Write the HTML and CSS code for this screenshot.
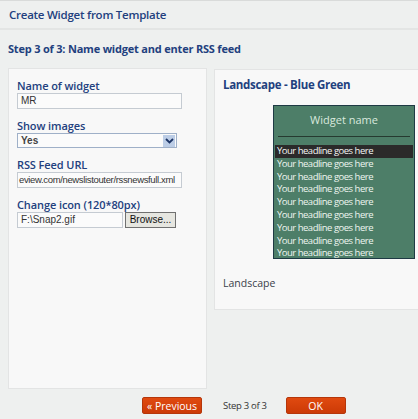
FILE: index.html
```html
<!DOCTYPE html>
<html>
<head>
<meta charset="utf-8">
<link rel="stylesheet" href="styles.css">
</head>
<body>
<div class="page">
  <div class="header"><h1 class="title">Create Widget from Template</h1></div>
  <h2 class="step">Step 3 of 3: Name widget and enter RSS feed</h2>
  <div class="main">
    <div class="panel left">
      <div class="field">
        <label class="label">Name of widget</label>
        <div class="input wide">MR</div>
      </div>
      <div class="field">
        <label class="label">Show images</label>
        <div class="select"><span class="sel-text">Yes</span><span class="sel-btn"><svg width="9" height="6" viewBox="0 0 9 6"><path d="M1 1 L4.5 4.5 L8 1" fill="none" stroke="#1d3566" stroke-width="1.8"/></svg></span></div>
      </div>
      <div class="field">
        <label class="label">RSS Feed URL</label>
        <div class="input wide url">eview.com/newslistouter/rssnewsfull.xml</div>
      </div>
      <div class="field">
        <label class="label">Change icon (120*80px)</label>
        <div class="file-row"><div class="input file">F:\Snap2.gif</div><div class="browse">Browse...</div></div>
      </div>
    </div>
    <div class="panel right">
      <h3 class="tpl-title">Landscape - Blue Green</h3>
      <div class="preview">
        <div class="pv-name">Widget name</div>
        <div class="pv-rule"></div>
        <div class="pv-list">
          <div class="pv-row active">Your headline goes here</div>
          <div class="pv-row">Your headline goes here</div>
          <div class="pv-row">Your headline goes here</div>
          <div class="pv-row">Your headline goes here</div>
          <div class="pv-row">Your headline goes here</div>
          <div class="pv-row">Your headline goes here</div>
          <div class="pv-row">Your headline goes here</div>
          <div class="pv-row">Your headline goes here</div>
          <div class="pv-row">Your headline goes here</div>
        </div>
      </div>
      <div class="tpl-name">Landscape</div>
    </div>
  </div>
  <div class="footer">
    <button class="btn prev">« Previous</button>
    <span class="step-count">Step 3 of 3</span>
    <button class="btn ok">OK</button>
  </div>
</div>
</body>
</html>
```

FILE: styles.css
```css
html, body {
  margin: 0;
  padding: 0;
}
body {
  background: #eef0ef;
  font-family: "Open Sans", "DejaVu Sans", sans-serif;
  width: 418px;
  height: 419px;
  overflow: hidden;
}
.page {
  width: 418px;
}
.header {
  border-top: 1px solid #d9dbda;
  border-bottom: 2px solid #e3e5e4;
  height: 27px;
  padding-left: 9px;
  display: flex;
  align-items: center;
}
.title {
  margin: 0;
  font-size: 11.5px;
  font-weight: 600;
  color: #22407e;
  letter-spacing: -0.25px;
}
.step {
  margin: 0;
  padding: 11px 0 0 8px;
  height: 27px;
  font-size: 11px;
  font-weight: 700;
  color: #22407e;
  letter-spacing: -0.2px;
  line-height: 16px;
  box-sizing: border-box;
}
.main {
  display: flex;
  align-items: flex-start;
  gap: 7px;
  padding-left: 8px;
  margin-top: 11px;
}
.panel {
  background: #f8f8f8;
  border: 1px solid #e3e4e4;
  box-sizing: border-box;
  flex-shrink: 0;
}
.left {
  width: 199px;
  height: 321px;
  padding: 9px 0 0 8px;
}
.right {
  width: 220px;
  height: 241px;
  padding: 7px 0 0 8px;
  margin-top: 1px;
}
.field {
  margin-bottom: 9px;
}
.label {
  display: block;
  font-size: 11px;
  font-weight: 600;
  color: #22407e;
  line-height: 15px;
  letter-spacing: -0.1px;
}
.input {
  height: 16px;
  box-sizing: border-box;
  border: 1px solid #c5cbd2;
  background: #fbfbfb;
  font-family: "Liberation Sans", Arial, sans-serif;
  font-size: 10px;
  color: #333;
  line-height: 14px;
  padding-left: 3px;
  white-space: nowrap;
  overflow: hidden;
}
.wide {
  width: 165px;
}
.url {
  font-size: 9.5px;
  letter-spacing: -0.35px;
  padding-left: 1px;
}
.select {
  width: 160px;
  height: 15px;
  box-sizing: border-box;
  border: 1px solid #9fb0c8;
  background: #fbfbfb;
  display: flex;
  align-items: center;
  justify-content: space-between;
}
.sel-text {
  font-family: "Liberation Sans", Arial, sans-serif;
  font-size: 10px;
  font-weight: 700;
  color: #444;
  padding-left: 3px;
}
.sel-btn {
  width: 12px;
  height: 12px;
  margin-right: 1px;
  background: #bccde6;
  display: flex;
  align-items: center;
  justify-content: center;
}
.file-row {
  display: flex;
  gap: 2px;
}
.file {
  width: 106px;
}
.browse {
  width: 51px;
  height: 16px;
  box-sizing: border-box;
  border: 1px solid #707070;
  background: #e6e6e0;
  font-family: "Liberation Sans", Arial, sans-serif;
  font-size: 10px;
  color: #111;
  text-align: center;
  line-height: 14px;
}
.tpl-title {
  margin: 0;
  font-size: 11.5px;
  font-weight: 700;
  color: #22407e;
  line-height: 15px;
  letter-spacing: -0.3px;
}
.preview {
  margin: 13px 0 0 50px;
  width: 142px;
  height: 154px;
  box-sizing: border-box;
  background: #4d7e68;
  border: 1px solid #1e3a44;
  overflow: hidden;
}
.pv-name {
  text-align: center;
  font-size: 11px;
  color: #d9e9de;
  padding-top: 6px;
  line-height: 15px;
}
.pv-rule {
  margin: 9px 4px 0 4px;
  height: 1px;
  background: #263a30;
}
.pv-list {
  margin-top: 8px;
}
.pv-row {
  height: 12.8px;
  line-height: 12.8px;
  font-size: 9.5px;
  color: #eef5f0;
  padding-left: 3px;
  letter-spacing: -0.5px;
  white-space: nowrap;
}
.pv-row.active {
  background: #2b2a2a;
  color: #f4f4f4;
  margin: 0 1px;
  padding-left: 2px;
}
.tpl-name {
  margin-top: 17px;
  font-size: 10.5px;
  color: #3a3f4a;
}
.footer {
  display: flex;
  align-items: center;
  padding-left: 142px;
  margin-top: 8px;
}
.btn {
  height: 17px;
  width: 60px;
  border: 1px solid #b5360a;
  border-radius: 2px;
  background: linear-gradient(#e04a10, #cc3a06);
  color: #fff;
  font-family: "Open Sans", sans-serif;
  font-size: 10.5px;
  padding: 0;
  line-height: 14px;
}
.step-count {
  font-size: 9.5px;
  color: #333;
  letter-spacing: -0.3px;
  margin: 0 19px 0 21px;
}
```
